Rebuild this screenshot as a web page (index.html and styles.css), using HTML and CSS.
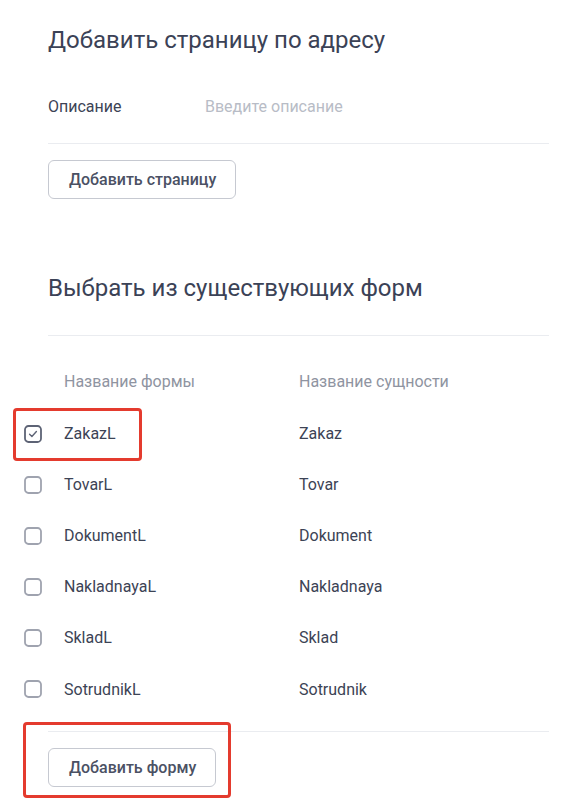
FILE: index.html
```html
<!DOCTYPE html>
<html lang="ru">
<head>
<meta charset="utf-8">
<link rel="stylesheet" href="styles.css">
</head>
<body>
<div class="page">
  <section class="block">
    <h2 class="title">Добавить страницу по адресу</h2>
    <div class="field">
      <span class="label">Описание</span>
      <span class="placeholder">Введите описание</span>
    </div>
    <button class="btn btn-page">Добавить страницу</button>
  </section>

  <section class="block block-forms">
    <h2 class="title">Выбрать из существующих форм</h2>
    <div class="rule"></div>
  </section>

  <div class="table">
    <div class="row head">
      <span></span>
      <span>Название формы</span>
      <span>Название сущности</span>
    </div>
    <div class="row selected">
      <span class="cb checked"><svg viewBox="0 0 18 18" width="18" height="18"><rect x="1" y="1" width="16" height="16" rx="3.5" fill="none" stroke="#5d6375" stroke-width="1.8"/><path d="M5.6 9.2 L7.9 11.4 L12.4 6.6" fill="none" stroke="#5d6375" stroke-width="1.4" stroke-linecap="round" stroke-linejoin="round"/></svg></span>
      <span>ZakazL</span>
      <span>Zakaz</span>
      <span class="mark mark-row"></span>
    </div>
    <div class="row">
      <span class="cb"><svg viewBox="0 0 18 18" width="18" height="18"><rect x="1" y="1" width="16" height="16" rx="3.5" fill="none" stroke="#9fa3af" stroke-width="1.8"/></svg></span>
      <span>TovarL</span>
      <span>Tovar</span>
    </div>
    <div class="row">
      <span class="cb"><svg viewBox="0 0 18 18" width="18" height="18"><rect x="1" y="1" width="16" height="16" rx="3.5" fill="none" stroke="#9fa3af" stroke-width="1.8"/></svg></span>
      <span>DokumentL</span>
      <span>Dokument</span>
    </div>
    <div class="row">
      <span class="cb"><svg viewBox="0 0 18 18" width="18" height="18"><rect x="1" y="1" width="16" height="16" rx="3.5" fill="none" stroke="#9fa3af" stroke-width="1.8"/></svg></span>
      <span>NakladnayaL</span>
      <span>Nakladnaya</span>
    </div>
    <div class="row">
      <span class="cb"><svg viewBox="0 0 18 18" width="18" height="18"><rect x="1" y="1" width="16" height="16" rx="3.5" fill="none" stroke="#9fa3af" stroke-width="1.8"/></svg></span>
      <span>SkladL</span>
      <span>Sklad</span>
    </div>
    <div class="row last">
      <span class="cb"><svg viewBox="0 0 18 18" width="18" height="18"><rect x="1" y="1" width="16" height="16" rx="3.5" fill="none" stroke="#9fa3af" stroke-width="1.8"/></svg></span>
      <span>SotrudnikL</span>
      <span>Sotrudnik</span>
    </div>
  </div>

  <section class="block footer">
    <div class="rule-footer"></div>
    <button class="btn btn-form">Добавить форму</button>
    <span class="mark mark-footer"></span>
  </section>
</div>
</body>
</html>
```

FILE: styles.css
```css
* { box-sizing: border-box; }
html, body { margin: 0; padding: 0; background: #ffffff; }
body {
  font-family: Roboto, "Noto Sans", "Liberation Sans", sans-serif;
  color: #3c4355;
  font-size: 16px;
}
.page {
  width: 576px;
  height: 802px;
  overflow: hidden;
  padding: 24px 27px 0 8px;
}
.block { padding-left: 40px; }
.title {
  margin: 0;
  font-size: 24px;
  line-height: 32px;
  font-weight: 400;
  color: #3b4256;
}
.field {
  margin-top: 31px;
  height: 57px;
  padding-bottom: 17px;
  border-bottom: 1px solid #eaecf0;
  display: flex;
  align-items: center;
}
.label { width: 157px; color: #3c4355; }
.placeholder { color: #b8bcc6; }
.btn {
  display: inline-flex;
  align-items: center;
  height: 39px;
  margin-top: 16px;
  padding: 0 19px 0 20px;
  border: 1px solid #c6c9d1;
  border-radius: 6px;
  background: #fff;
  font-family: Roboto, "Noto Sans", "Liberation Sans", sans-serif;
  font-size: 16px;
  font-weight: 500;
  color: #4b5164;
}
.block-forms { margin-top: 73px; }
.rule {
  margin-top: 31px;
  border-top: 1px solid #eaecf0;
}
.table { margin-top: 18px; }
.row {
  position: relative;
  display: grid;
  grid-template-columns: 56px 235px 1fr;
  align-items: center;
  height: 51px;
  color: #3c4355;
}
.row.head { height: 54px; color: #8f94a1; }
.row.last { height: 52px; }
.cb { padding-left: 16px; display: flex; align-items: center; }
.cb svg { display: block; }
.mark {
  position: absolute;
  border: 3px solid #e43b2e;
  border-radius: 4px;
}
.mark-row { left: 5px; top: 0; width: 129px; height: 53px; }
.footer { position: relative; padding-top: 16px; }
.rule-footer { border-top: 1px solid #eaecf0; }
.mark-footer { left: 15px; top: 7px; width: 208px; height: 76px; }
```
